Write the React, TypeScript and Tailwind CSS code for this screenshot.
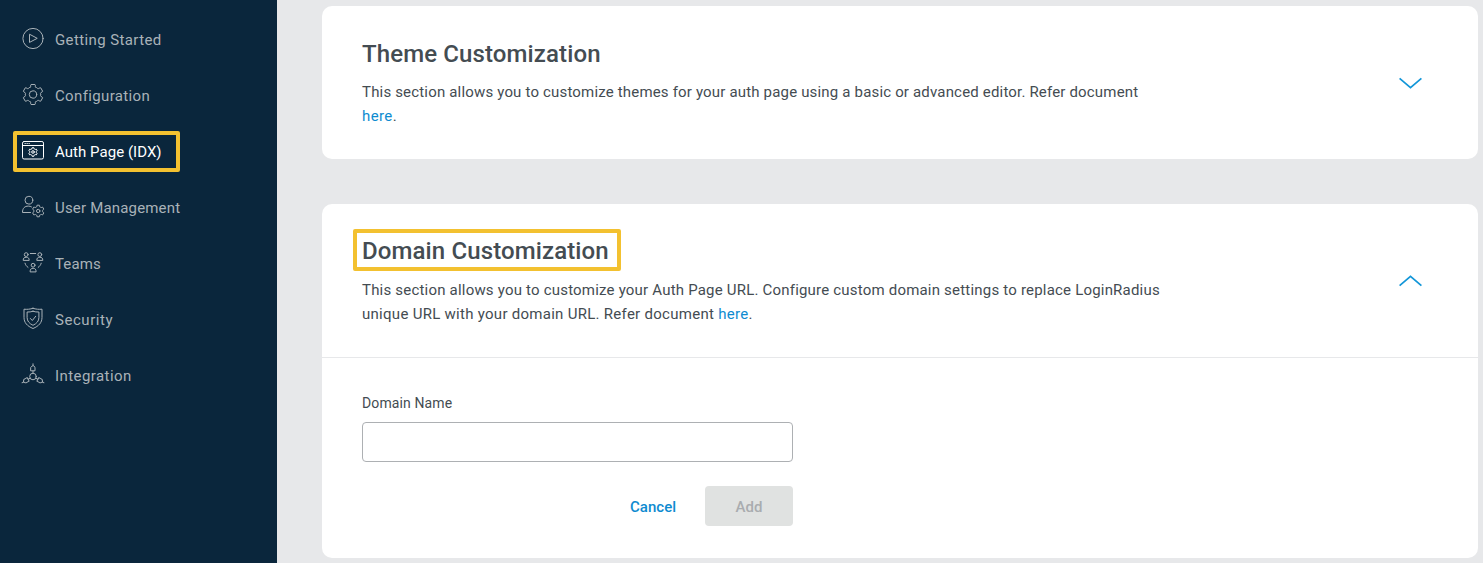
import type { ReactNode } from 'react';

/** Outline of a six-toothed gear centred on (cx, cy). */
function gearPath(cx: number, cy: number, r: number): string {
  const pts: string[] = [];
  const profile: Array<[number, number]> = [
    [-26, 0.76],
    [-21, 0.74],
    [-17, 0.79],
    [-14, 0.94],
    [-11, 1],
    [11, 1],
    [14, 0.94],
    [17, 0.79],
    [21, 0.74],
    [26, 0.76],
  ];
  for (let i = 0; i < 6; i++) {
    for (const [offset, k] of profile) {
      const a = ((i * 60 + offset - 90) * Math.PI) / 180;
      pts.push(`${(cx + Math.cos(a) * r * k).toFixed(2)} ${(cy + Math.sin(a) * r * k).toFixed(2)}`);
    }
  }
  return `M${pts.join('L')}Z`;
}

function Icon({ children }: { children: ReactNode }) {
  return (
    <svg
      viewBox="0 0 24 24"
      className="h-6 w-6 shrink-0"
      fill="none"
      stroke="currentColor"
      strokeWidth="1"
      strokeLinecap="round"
      strokeLinejoin="round"
    >
      {children}
    </svg>
  );
}

const StartIcon = () => (
  <Icon>
    <circle cx="12" cy="11.5" r="10.1" />
    <path d="M8.5 7.6v7.8l7.4-3.9z" />
  </Icon>
);

const GearIcon = () => (
  <Icon>
    <path d={gearPath(12, 11.5, 10.2)} />
    <circle cx="12" cy="11.5" r="3.7" />
  </Icon>
);

const PageIcon = () => (
  <Icon>
    <rect x="1.5" y="2.5" width="21" height="17.5" rx="1.6" />
    <path d="M1.5 6.5h21M4 4.5h.3M6 4.5h.3M8 4.5h.3" />
    <path d={gearPath(12, 13, 4.4)} />
    <circle cx="12" cy="13" r="1.3" />
  </Icon>
);

const UserIcon = () => (
  <Icon>
    <circle cx="7.9" cy="5.2" r="3.9" />
    <path d="M9.5 17.5H1.5c0-4.4 2.2-6.4 5.8-6.4 1.4 0 2.4.3 3.2.8" />
    <path d={gearPath(17.2, 16, 5.9)} />
    <circle cx="17.2" cy="16" r="1.7" />
  </Icon>
);

const TeamsIcon = () => (
  <Icon>
    <circle cx="5.2" cy="3.6" r="1.9" />
    <path d="M2.2 9c0-2 1-2.7 3-2.7s3 .7 3 2.7z" />
    <circle cx="18.8" cy="3.6" r="1.9" />
    <path d="M15.8 9c0-2 1-2.7 3-2.7s3 .7 3 2.7z" />
    <circle cx="12.1" cy="14.2" r="1.9" />
    <path d="M9.1 20.5c0-2.3 1-3.2 3-3.2s3 .9 3 3.2z" />
    <path d="M9.3 2.5h5.4M4 12.2c.5 1.8 1.5 3.1 3 4.2M20.2 12.2c-.5 1.8-1.5 3.1-3 4.2" />
  </Icon>
);

const ShieldIcon = () => (
  <Icon>
    <path d="M12 1.3c3 1 6 1.2 9 .9v8.2c0 5.2-3.2 8.7-9 11.1-5.8-2.4-9-5.9-9-11.1V2.2c3 .3 6 .1 9-.9z" />
    <path d="M12 4.3c2 .6 3.8.8 5.9.7v5.5c0 3.5-2 5.9-5.9 7.8-3.900-1.900-5.900-4.300-5.900-7.800V5c2.100.1 3.900-.1 5.900-.7z" />
    <path d="M9.4 11.5l1.900 2 3.400-4.200" />
  </Icon>
);

/** One arm of the hub, drawn pointing up and rotated into place. */
const Arm = ({ angle }: { angle: number }) => (
  <g transform={`rotate(${angle} 12 13.5)`}>
    <path d="M12 10.200V8M10 7.800h4V4.200L12.700 2.900h-1.400L10 4.200zM12 2.700V.8" />
  </g>
);

const HubIcon = () => (
  <Icon>
    <circle cx="12" cy="13.5" r="3.3" />
    <Arm angle={0} />
    <Arm angle={120} />
    <Arm angle={240} />
  </Icon>
);

const navItems = [
  { label: 'Getting Started', icon: <StartIcon />, spacing: 'tracking-[0.39px]' },
  { label: 'Configuration', icon: <GearIcon />, spacing: 'tracking-[0.36px]' },
  { label: 'Auth Page (IDX)', icon: <PageIcon />, spacing: 'tracking-[0.04px]', active: true },
  { label: 'User Management', icon: <UserIcon />, spacing: 'tracking-[0.18px]' },
  { label: 'Teams', icon: <TeamsIcon />, spacing: 'tracking-[0.1px]' },
  { label: 'Security', icon: <ShieldIcon />, spacing: 'tracking-[0.55px]' },
  { label: 'Integration', icon: <HubIcon />, spacing: 'tracking-[0.43px]' },
];

function Sidebar() {
  return (
    <nav className="w-[277px] shrink-0 bg-[#0a263c] pt-[11px]">
      {navItems.map((item) => (
        <div key={item.label} className="flex h-14 items-center pl-[13px]">
          <a
            className={`flex h-[41px] items-center gap-2.5 rounded-xs border-4 pl-1 pr-3.5 text-[15px] whitespace-nowrap ${
              item.active ? 'border-[#f3c130] text-white' : 'border-transparent text-[#a9b2b8]'
            }`}
          >
            {item.icon}
            <span className={`pt-0.5 ${item.spacing}`}>{item.label}</span>
          </a>
        </div>
      ))}
    </nav>
  );
}

function Chevron({ up = false }: { up?: boolean }) {
  return (
    <svg viewBox="0 0 24 12" className="h-3 w-6 shrink-0" fill="none" stroke="#1296d8" strokeWidth="1.7">
      <path d={up ? 'M1.6 10.7L12.5 1.3l10.9 9.4' : 'M1.6 1.3L12.5 10.7 23.4 1.3'} />
    </svg>
  );
}

const Link = () => <a className="text-[#0e8bd0]">here</a>;

export default function App() {
  return (
    <div className="flex h-[563px] overflow-hidden bg-[#e7e8ea] font-['Roboto',sans-serif] text-[#444c52]">
      <Sidebar />
      <main className="flex flex-1 flex-col gap-[45px] pt-1.5 pr-[5px] pl-[45px]">
        <section className="flex h-[153px] items-center justify-between rounded-[10px] bg-white pr-14 pl-10">
          <div className="pb-px">
            <h2 className="h-[43px] text-2xl leading-[34px] font-medium tracking-[0.12px] whitespace-nowrap">
              Theme Customization
            </h2>
            <p className="text-[15px] leading-6 whitespace-nowrap">
              <span className="tracking-[0.175px]">
                This section allows you to customize themes for your auth page using a basic or advanced editor. Refer document
              </span>
              <br />
              <span className="tracking-[0.4px]">
                <Link />.
              </span>
            </p>
          </div>
          <Chevron />
        </section>

        <section className="h-[354px] rounded-[10px] bg-white">
          <header className="flex h-[154px] items-center justify-between border-b border-[#e7e8ea] pr-14 pl-10">
            <div className="pb-[7px]">
              <h2 className="-ml-[9px] flex h-[42px] w-[268px] items-center rounded-xs border-4 border-[#f3c130] pt-0.5 pl-[5px] text-2xl font-medium tracking-[0.12px] whitespace-nowrap">
                Domain Customization
              </h2>
              <p className="mt-[7px] text-[15px] leading-6 whitespace-nowrap">
                <span className="tracking-[0.2px]">
                  This section allows you to customize your Auth Page URL. Configure custom domain settings to replace LoginRadius
                </span>
                <br />
                <span className="tracking-[0.28px]">
                  unique URL with your domain URL. Refer document <Link />.
                </span>
              </p>
            </div>
            <Chevron up />
          </header>

          <form className="w-[471px] pt-[33px] pl-10">
            <label htmlFor="domain" className="block h-[31px] text-sm leading-6 tracking-[0.12px]">
              Domain Name
            </label>
            <input id="domain" className="block h-10 w-full rounded-[4px] border border-[#adb0b3] bg-white px-3 outline-none" />
            <div className="mt-6 flex items-center justify-end gap-[29px] text-[15px] font-medium">
              <button type="button" className="pt-0.5 text-[#0e8bd0]">
                Cancel
              </button>
              <button type="button" disabled className="h-10 w-[88px] rounded-[4px] bg-[#e0e2e1] pt-0.5 text-[#a9acaf]">
                Add
              </button>
            </div>
          </form>
        </section>
      </main>
    </div>
  );
}
